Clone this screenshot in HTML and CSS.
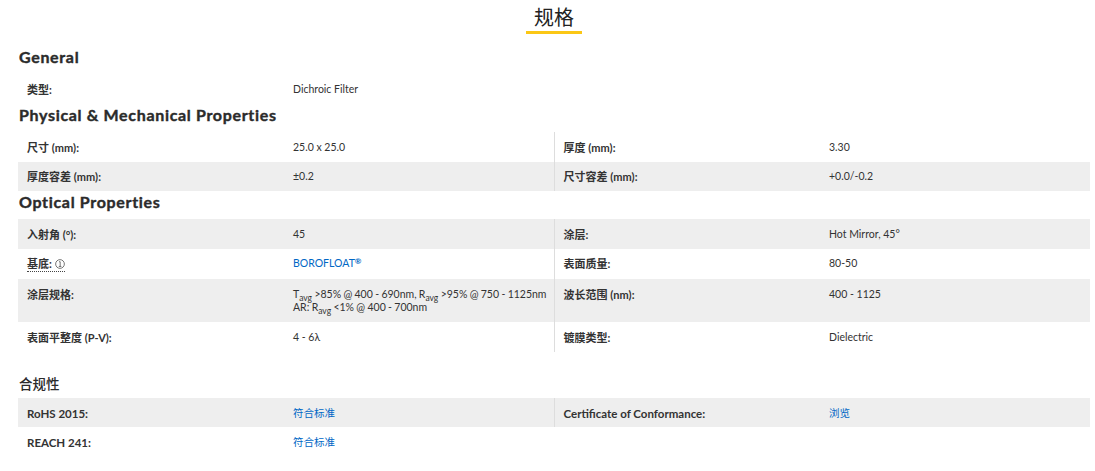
FILE: index.html
```html
<!DOCTYPE html>
<html lang="zh">
<head>
<meta charset="utf-8">
<title>规格</title>
<link rel="stylesheet" href="styles.css">
</head>
<body>
<main class="page">
  <div class="title-wrap"><h2 class="title">规格</h2></div>

  <h3 class="group">General</h3>
  <table class="specs">
    <tr class="r30"><th>类型:</th><td>Dichroic Filter</td><th></th><td></td></tr>
  </table>

  <h3 class="group">Physical &amp; Mechanical Properties</h3>
  <table class="specs">
    <tr class="r30"><th>尺寸 (mm):</th><td>25.0 x 25.0</td><th class="half">厚度 (mm):</th><td>3.30</td></tr>
    <tr class="r29 grey up"><th>厚度容差 (mm):</th><td>±0.2</td><th class="half">尺寸容差 (mm):</th><td>+0.0/-0.2</td></tr>
  </table>

  <h3 class="group">Optical Properties</h3>
  <table class="specs">
    <tr class="r30 grey"><th>入射角 (°):</th><td>45</td><th class="half">涂层:</th><td>Hot Mirror, 45°</td></tr>
    <tr class="r30 up"><th><span class="tip">基底: <svg class="info" viewBox="0 0 11 11" width="10" height="10"><circle cx="5.5" cy="5.5" r="4.8"/><path d="M4.4 3h1.3v5M4.2 8.2h2.8"/></svg></span></th><td><a class="link" href="#">BOROFLOAT<sup>®</sup></a></td><th class="half">表面质量:</th><td>80-50</td></tr>
    <tr class="r43 grey"><th>涂层规格:</th><td class="nowrap">T<sub>avg</sub> &gt;85% @ 400 - 690nm, R<sub>avg</sub> &gt;95% @ 750 - 1125nm<br>AR: R<sub>avg</sub> &lt;1% @ 400 - 700nm</td><th class="half">波长范围 (nm):</th><td>400 - 1125</td></tr>
    <tr class="r30"><th>表面平整度 (P-V):</th><td>4 - 6λ</td><th class="half">镀膜类型:</th><td>Dielectric</td></tr>
  </table>

  <h3 class="group group-cn">合规性</h3>
  <table class="specs">
    <tr class="r29 grey"><th class="latin">RoHS 2015:</th><td><a class="link" href="#">符合标准</a></td><th class="half latin">Certificate of Conformance:</th><td><a class="link" href="#">浏览</a></td></tr>
    <tr class="r29"><th class="latin">REACH 241:</th><td><a class="link" href="#">符合标准</a></td><th></th><td></td></tr>
  </table>
</main>
</body>
</html>
```

FILE: styles.css
```css
* { box-sizing: border-box; }
html, body { margin: 0; background: #fff; }
body {
  font-family: "Lato", "Noto Sans CJK SC", sans-serif;
  color: #333;
  font-size: 11px;
  line-height: 13px;
}
.page { padding: 0 5px 0 18px; height: 471px; overflow: hidden; }
.title-wrap { height: 46px; text-align: center; }
.title {
  display: inline-block;
  margin: 0;
  width: 56px;
  height: 34px;
  padding-top: 4px;
  border-bottom: 3px solid #fbc715;
  font: 400 20px/26px "Noto Sans CJK SC", sans-serif;
  color: #222;
  text-align: center;
}
.group {
  margin: 0;
  height: 28px;
  padding: 1px 0 0 1px;
  font: 700 16px/20px "Lato", "Noto Sans CJK SC", sans-serif;
  letter-spacing: 0.67px;
  -webkit-text-stroke: 0.4px #2b2b2b;
  color: #2b2b2b;
}
.group-cn {
  margin-top: 18px;
  padding: 3px 0 0 1px;
  font: 500 13.5px/20px "Noto Sans CJK SC", sans-serif;
  letter-spacing: 0;
  -webkit-text-stroke: 0;
}
.specs {
  width: 1072px;
  table-layout: fixed;
  border-collapse: collapse;
}
.specs th, .specs td {
  padding: 9px 9px 0;
  text-align: left;
  vertical-align: top;
}
.specs th { width: 266px; font-weight: 700; }
.specs td { width: 270px; font-weight: 400; font-size: 10.5px; }
.specs th.latin { font-size: 11.5px; }
.specs .up th, .specs .up td { padding-top: 8px; }
.nowrap { white-space: nowrap; word-spacing: -0.35px; }
.half { border-left: 1px solid #ddd; }
.r30 { height: 30px; }
.r29 { height: 29px; }
.r43 { height: 43px; }
.grey { background: #eee; }
.link { color: #0067c5; text-decoration: none; }
sup { font-size: 8px; line-height: 0; vertical-align: 3px; font-weight: 700; }
sub { font-size: 8.5px; line-height: 0; vertical-align: -3px; }
.tip { border-bottom: 1px dotted #444; display: inline-block; height: 15px; }
.info { vertical-align: -1px; fill: none; stroke: #444; stroke-width: 0.8; }
```
